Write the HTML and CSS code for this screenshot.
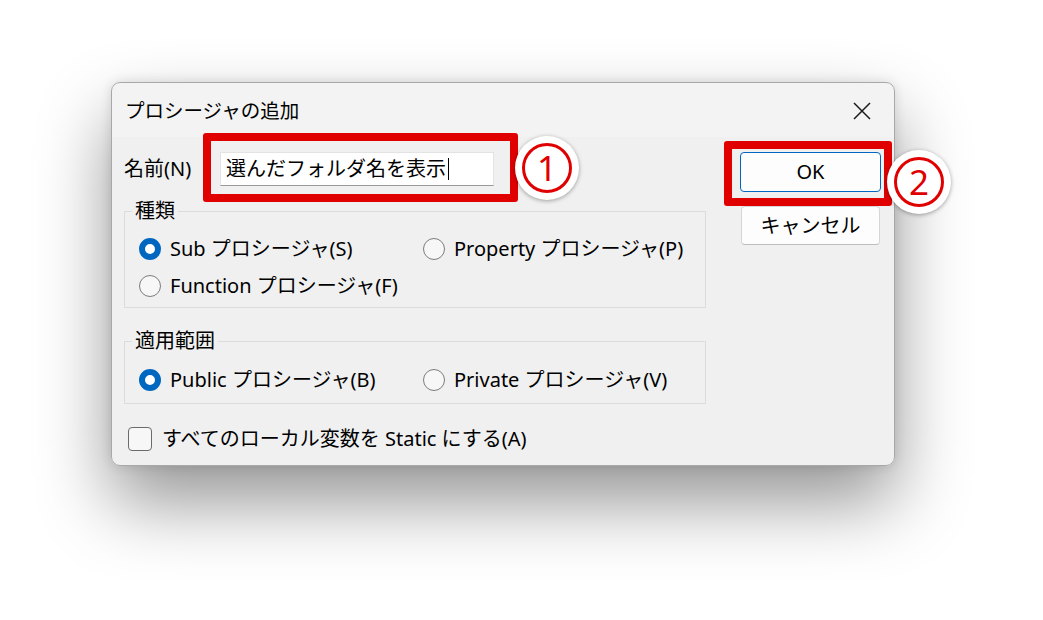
FILE: index.html
```html
<!DOCTYPE html>
<html lang="ja">
<head>
<meta charset="utf-8">
<title>プロシージャの追加</title>
<link rel="stylesheet" href="styles.css">
</head>
<body>
<div class="stage">
  <div class="dialog">
    <div class="titlebar">
      <span class="title">プロシージャの追加</span>
      <svg class="close" width="18" height="18" viewBox="0 0 18 18"><path d="M1 1 L17 17 M17 1 L1 17" stroke="#1a1a1a" stroke-width="1.5" fill="none"/></svg>
    </div>
    <div class="content">
      <div class="left">
        <div class="name-row">
          <span class="name-label">名前(N)</span>
          <div class="hl hl1">
            <div class="input"><span>選んだフォルダ名を表示</span><span class="caret"></span></div>
            <span class="badge badge1"><span class="ring">1</span></span>
          </div>
        </div>
        <fieldset class="group g1">
          <legend>種類</legend>
          <div class="opts">
            <label class="opt"><span class="radio on"></span>Sub プロシージャ(S)</label>
            <label class="opt"><span class="radio"></span>Property プロシージャ(P)</label>
            <label class="opt"><span class="radio"></span>Function プロシージャ(F)</label>
          </div>
        </fieldset>
        <fieldset class="group g2">
          <legend>適用範囲</legend>
          <div class="opts">
            <label class="opt"><span class="radio on"></span>Public プロシージャ(B)</label>
            <label class="opt"><span class="radio"></span>Private プロシージャ(V)</label>
          </div>
        </fieldset>
        <label class="check-row"><span class="checkbox"></span>すべてのローカル変数を Static にする(A)</label>
      </div>
      <div class="right">
        <div class="hl hl2">
          <button class="btn ok">OK</button>
          <span class="badge badge2"><span class="ring">2</span></span>
        </div>
        <button class="btn cancel">キャンセル</button>
      </div>
    </div>
  </div>
</div>
</body>
</html>
```
FILE: styles.css
```css
html, body {
  margin: 0;
  padding: 0;
  background: #ffffff;
}
body {
  width: 1043px;
  height: 620px;
  overflow: hidden;
  font-family: "Noto Sans", "Noto Sans CJK JP", sans-serif;
  color: #000;
}
.stage {
  padding: 82px 0 0 111px;
}
.dialog {
  width: 782px;
  height: 382px;
  border: 1px solid #a8a8a8;
  border-radius: 9px;
  background: linear-gradient(#f3f3f3 0 54px, #f0f0f0 54px);
  box-shadow: 0 36px 72px rgba(0, 0, 0, 0.42), 0 0 12px rgba(0, 0, 0, 0.12);
  display: flex;
  flex-direction: column;
}
.titlebar {
  height: 50px;
  box-sizing: border-box;
  padding: 16px 23px 0 13px;
  display: flex;
  justify-content: space-between;
  align-items: flex-start;
}
.title {
  font-size: 19.5px;
  line-height: 24px;
}
.close {
  margin-top: 3px;
}
.content {
  display: flex;
  gap: 18px;
  padding: 0 2px 11px 12px;
}
.left {
  width: 582px;
  display: flex;
  flex-direction: column;
}
.name-row {
  display: flex;
  align-items: center;
  margin-bottom: -2px;
  font-size: 20px;
  line-height: 24px;
}
.name-label {
  width: 79px;
  padding-top: 2px;
}
.hl {
  position: relative;
  border: 8px solid #e00000;
  border-radius: 3px;
}
.hl1 {
  padding: 11px 16px 8px 9px;
}
.input {
  width: 274px;
  height: 34px;
  box-sizing: border-box;
  background: #fff;
  border: 1px solid #e3e3e3;
  border-bottom-color: #9a9a9a;
  padding-left: 5px;
  display: flex;
  align-items: center;
  font-size: 20px;
  line-height: 24px;
}
.caret {
  display: inline-block;
  width: 1px;
  height: 22px;
  background: #000;
  margin-left: 2px;
}
.badge {
  position: absolute;
  width: 64px;
  height: 64px;
  border-radius: 50%;
  background: #fff;
  box-shadow: 0 1px 4px rgba(0, 0, 0, 0.35);
  display: flex;
  align-items: center;
  justify-content: center;
}
.badge1 {
  left: 304px;
  top: -5px;
}
.badge2 {
  left: 155px;
  top: 1px;
}
.ring {
  width: 50px;
  height: 50px;
  box-sizing: border-box;
  border: 3px solid #e00000;
  border-radius: 50%;
  display: flex;
  align-items: center;
  justify-content: center;
  color: #e00000;
  font-family: "Noto Sans", sans-serif;
  font-size: 35px;
  font-weight: 400;
  line-height: 1;
  padding-bottom: 2px;
}
.group {
  margin: 0;
  min-width: 0;
  border: 1px solid #dcdcdc;
  font-size: 20px;
  line-height: 22px;
}
.group legend {
  padding: 0 3px;
  margin-left: -7px;
  line-height: 22px;
}
.g1 {
  padding: 12px 0 6px 14px;
}
.g2 {
  margin-top: 22px;
  padding: 13px 0 8px 14px;
}
.opts {
  display: grid;
  grid-template-columns: 284px auto;
  row-gap: 7px;
}
.opt {
  display: flex;
  align-items: center;
  height: 30px;
  line-height: 24px;
}
.radio {
  width: 22px;
  height: 22px;
  box-sizing: border-box;
  border-radius: 50%;
  border: 1.5px solid #7c7c7c;
  background: #f7f7f7;
  margin-right: 9px;
  flex: none;
}
.radio.on {
  border: 6px solid #0067c0;
  background: #fff;
}
.check-row {
  margin-top: 20px;
  margin-left: 4px;
  height: 30px;
  display: flex;
  align-items: center;
  font-size: 20px;
  line-height: 24px;
}
.checkbox {
  width: 24px;
  height: 24px;
  box-sizing: border-box;
  border: 1.5px solid #6a6a6a;
  border-radius: 4px;
  background: #f7f7f7;
  margin-right: 10px;
  flex: none;
}
.right {
  width: 168px;
  margin-top: 8px;
  display: flex;
  flex-direction: column;
}
.hl2 {
  padding: 3px 3px 6px 8px;
}
.btn {
  font-family: "Noto Sans", "Noto Sans CJK JP", sans-serif;
  font-size: 20px;
  line-height: 24px;
  color: #000;
  background: #fdfdfd;
  border-radius: 4px;
  padding: 0;
  display: flex;
  align-items: center;
  justify-content: center;
}
.ok {
  width: 141px;
  height: 40px;
  border: 1px solid #0067c0;
}
.cancel {
  width: 139px;
  height: 39px;
  margin-left: 17px;
  border: 1px solid #d6d6d6;
  border-bottom-color: #bdbdbd;
}
```
